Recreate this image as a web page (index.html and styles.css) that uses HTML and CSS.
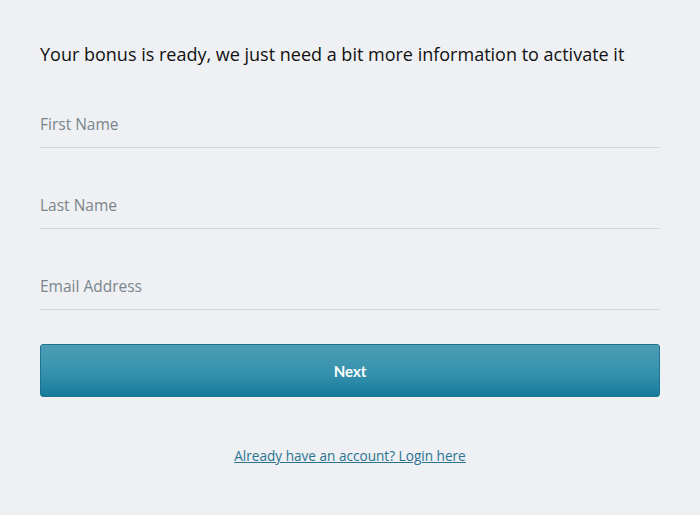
FILE: index.html
```html
<!DOCTYPE html>
<html>
<head>
<meta charset="utf-8">
<link rel="stylesheet" href="styles.css">
</head>
<body>
<div class="page">
  <h1 class="title">Your bonus is ready, we just need a bit more information to activate it</h1>
  <form class="form">
    <div class="field"><input class="input" type="text" placeholder="First Name"></div>
    <div class="field"><input class="input" type="text" placeholder="Last Name"></div>
    <div class="field"><input class="input" type="text" placeholder="Email Address"></div>
    <button class="btn" type="button">Next</button>
  </form>
  <div class="login"><a href="#" class="login-link">Already have an account? Login here</a></div>
</div>
</body>
</html>
```

FILE: styles.css
```css
html, body {
  margin: 0;
  padding: 0;
  background: #eef0f3;
}
.page {
  width: 620px;
  padding: 40px 40px 0 40px;
  font-family: "Open Sans", "Noto Sans", sans-serif;
}
.title {
  margin: 0;
  font-size: 18px;
  font-weight: 500;
  color: #111;
  line-height: 28px;
}
.form {
  display: flex;
  flex-direction: column;
  margin-top: 39px;
}
.field {
  border-bottom: 1px solid #d4d7db;
  height: 40px;
  margin-bottom: 40px;
}
.input {
  display: block;
  width: 100%;
  border: none;
  background: transparent;
  font-family: "Open Sans", "Noto Sans", sans-serif;
  font-size: 15.5px;
  color: #333;
  padding: 0;
  height: 34px;
  outline: none;
}
.input::placeholder {
  color: #7b858c;
}
.btn {
  margin-top: -6px;
  height: 53px;
  border: 1px solid #1e7391;
  border-radius: 3px;
  background: linear-gradient(to bottom, #4d9db4 0%, #3692ae 55%, #167a9b 100%);
  color: #fff;
  font-family: Lato, sans-serif;
  font-weight: 700;
  font-size: 15px;
  cursor: pointer;
}
.login {
  text-align: center;
  margin-top: 47px;
}
.login-link {
  color: #2b7390;
  font-size: 13.6px;
  text-decoration: underline;
}
```
